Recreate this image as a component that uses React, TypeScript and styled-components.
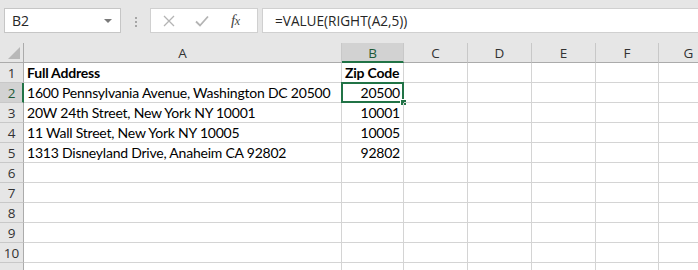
import React from 'react';
import styled, { createGlobalStyle } from 'styled-components';

const GlobalStyle = createGlobalStyle`
  html, body {
    margin: 0;
    padding: 0;
    background: #ffffff;
    overflow: hidden;
  }
  * { box-sizing: border-box; }
`;

const Page = styled.div`
  width: 698px;
  height: 270px;
  overflow: hidden;
  background: #ffffff;
`;

const Toolbar = styled.div`
  display: flex;
  align-items: flex-start;
  height: 43px;
  padding: 8px 0 0 4px;
  background: #e6e6e6;
  font-family: 'Open Sans', 'Noto Sans', sans-serif;
`;

const NameBox = styled.div`
  display: flex;
  align-items: center;
  justify-content: space-between;
  width: 117px;
  height: 25px;
  padding: 0 8px 0 7px;
  background: #ffffff;
  border: 1px solid #c6c6c6;
  font-size: 14px;
  color: #262626;
`;

const Caret = styled.span`
  width: 0;
  height: 0;
  border-left: 4px solid transparent;
  border-right: 4px solid transparent;
  border-top: 4px solid #7a7a7a;
`;

const Grip = styled.div`
  display: flex;
  flex-direction: column;
  gap: 2px;
  margin: 9px 13px 0 14px;
  span {
    width: 2px;
    height: 2px;
    background: #a6a6a6;
  }
`;

const FuncBox = styled.div`
  display: flex;
  align-items: center;
  width: 108px;
  height: 25px;
  background: #ffffff;
  border: 1px solid #d0d0d0;
  padding-left: 12px;
  gap: 20px;
`;

const FxLabel = styled.span`
  font-family: 'Liberation Serif', 'DejaVu Serif', serif;
  font-style: italic;
  font-size: 15px;
  color: #444444;
  margin-left: 2px;
  letter-spacing: -0.5px;
  small {
    font-size: 12px;
  }
`;

const FormulaBar = styled.div`
  flex: 1;
  height: 25px;
  margin-left: 4px;
  margin-right: -4px;
  display: flex;
  align-items: center;
  padding-left: 12px;
  background: #ffffff;
  border: 1px solid #d0d0d0;
  border-right: none;
  font-size: 13.6px;
  color: #262626;
`;

const Sheet = styled.div`
  display: grid;
  grid-template-columns: 24px 318px 62px 64px 64px 64px 63px 60px;
  grid-auto-rows: 20px;
  font-family: 'Lato', 'Noto Sans', sans-serif;
`;

const Corner = styled.div`
  position: relative;
  background: #e6e6e6;
  border-right: 1px solid #ababab;
  border-bottom: 1px solid #ababab;
  &::after {
    content: '';
    position: absolute;
    right: 3px;
    bottom: 3px;
    width: 0;
    height: 0;
    border-left: 12px solid transparent;
    border-bottom: 12px solid #b8b8b8;
  }
`;

const ColHead = styled.div<{ $active?: boolean }>`
  display: flex;
  align-items: center;
  justify-content: center;
  background: ${({ $active }) => ($active ? '#d2d2d2' : '#e6e6e6')};
  border-right: 1px solid #c8c8c8;
  border-bottom: ${({ $active }) => ($active ? '2px solid #217346' : '1px solid #ababab')};
  padding-top: ${({ $active }) => ($active ? '1px' : '0')};
  font-family: 'Open Sans', 'Noto Sans', sans-serif;
  font-size: 13.5px;
  color: ${({ $active }) => ($active ? '#1e5a38' : '#333333')};
`;

const RowHead = styled.div<{ $active?: boolean }>`
  display: flex;
  align-items: center;
  justify-content: center;
  background: ${({ $active }) => ($active ? '#d2d2d2' : '#e6e6e6')};
  border-right: ${({ $active }) => ($active ? '2px solid #217346' : '1px solid #ababab')};
  border-bottom: 1px solid #c8c8c8;
  padding-left: ${({ $active }) => ($active ? '1px' : '0')};
  font-family: 'Open Sans', 'Noto Sans', sans-serif;
  font-size: 13.5px;
  color: ${({ $active }) => ($active ? '#1e5a38' : '#333333')};
`;

const Cell = styled.div<{ $bold?: boolean; $num?: boolean; $selected?: boolean }>`
  position: relative;
  display: flex;
  align-items: flex-end;
  justify-content: ${({ $num }) => ($num ? 'flex-end' : 'flex-start')};
  padding: 0 3px 1px 3px;
  border-right: 1px solid #d4d4d4;
  border-bottom: 1px solid #d4d4d4;
  font-size: 14px;
  letter-spacing: -0.22px;
  font-weight: ${({ $bold }) => ($bold ? 700 : 400)};
  color: #000000;
  white-space: nowrap;
  ${({ $selected }) =>
    $selected &&
    `
    &::before {
      content: '';
      position: absolute;
      left: -1px;
      top: -1px;
      right: -1px;
      bottom: -1px;
      border: 2px solid #217346;
      pointer-events: none;
    }
    &::after {
      content: '';
      position: absolute;
      width: 5px;
      height: 5px;
      background: #217346;
      border: 1px solid #ffffff;
      box-sizing: content-box;
      right: -4px;
      bottom: -4px;
    }
  `}
`;

const columns = ['A', 'B', 'C', 'D', 'E', 'F', 'G'];

const data: Record<number, [string, string]> = {
  1: ['Full Address', 'Zip Code'],
  2: ['1600 Pennsylvania Avenue, Washington DC 20500', '20500'],
  3: ['20W 24th Street, New York NY 10001', '10001'],
  4: ['11 Wall Street, New York NY 10005', '10005'],
  5: ['1313 Disneyland Drive, Anaheim CA 92802', '92802'],
};

function CancelIcon() {
  return (
    <svg width="12" height="12" viewBox="0 0 12 12">
      <path d="M1 1 L11 11 M11 1 L1 11" stroke="#b4b4b4" strokeWidth="1.3" fill="none" />
    </svg>
  );
}

function CheckIcon() {
  return (
    <svg width="14" height="12" viewBox="0 0 14 12">
      <path d="M1 6.5 L5 10.5 L13 1.5" stroke="#b4b4b4" strokeWidth="1.8" fill="none" />
    </svg>
  );
}

export default function App() {
  // row 11 is only partly in view, its number falls below the window
  const rows = Array.from({ length: 11 }, (_, i) => i + 1);
  return (
    <Page>
      <GlobalStyle />
      <Toolbar>
        <NameBox>
          B2
          <Caret />
        </NameBox>
        <Grip>
          <span />
          <span />
          <span />
        </Grip>
        <FuncBox>
          <CancelIcon />
          <CheckIcon />
          <FxLabel>
            f<small>x</small>
          </FxLabel>
        </FuncBox>
        <FormulaBar>=VALUE(RIGHT(A2,5))</FormulaBar>
      </Toolbar>
      <Sheet>
        <Corner />
        {columns.map((c) => (
          <ColHead key={c} $active={c === 'B'}>
            {c}
          </ColHead>
        ))}
        {rows.map((r) => (
          <React.Fragment key={r}>
            <RowHead $active={r === 2}>{r <= 10 ? r : ''}</RowHead>
            <Cell $bold={r === 1}>{data[r]?.[0]}</Cell>
            <Cell $bold={r === 1} $num={r !== 1} $selected={r === 2}>
              {data[r]?.[1]}
            </Cell>
            {columns.slice(2).map((c) => (
              <Cell key={c} />
            ))}
          </React.Fragment>
        ))}
      </Sheet>
    </Page>
  );
}
